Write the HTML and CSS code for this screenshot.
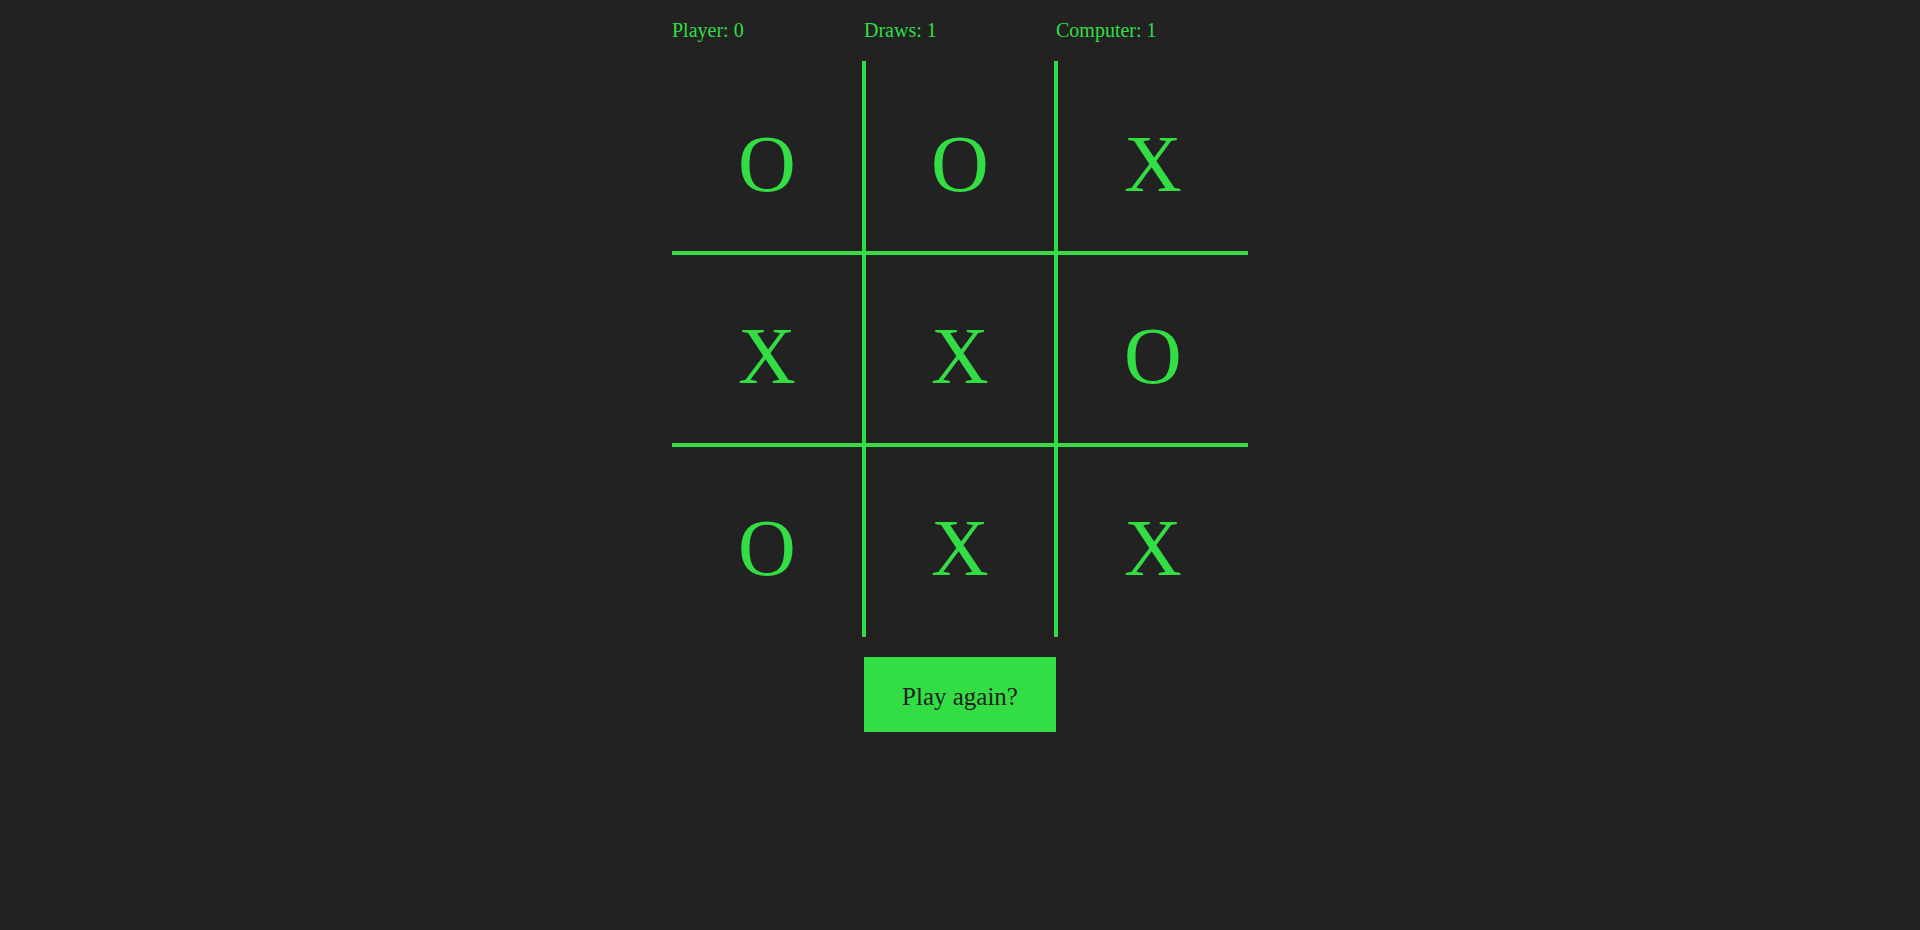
FILE: index.html
```html
<!DOCTYPE html>
<html>
<head>
<meta charset="utf-8">
<title>Tic Tac Toe</title>
<link rel="stylesheet" href="styles.css">
</head>
<body>
<div class="game">
  <div class="scores">
    <div class="score">Player: 0</div>
    <div class="score">Draws: 1</div>
    <div class="score">Computer: 1</div>
  </div>
  <div class="board">
    <div class="cell r1 c1">O</div>
    <div class="cell r1 c2">O</div>
    <div class="cell r1 c3">X</div>
    <div class="cell r2 c1">X</div>
    <div class="cell r2 c2">X</div>
    <div class="cell r2 c3">O</div>
    <div class="cell r3 c1">O</div>
    <div class="cell r3 c2">X</div>
    <div class="cell r3 c3">X</div>
  </div>
  <div class="actions">
    <button class="again">Play again?</button>
  </div>
</div>
</body>
</html>
```
FILE: styles.css
```css
html, body {
  margin: 0;
  padding: 0;
  background: #222222;
  height: 100%;
}
body {
  font-family: "Liberation Serif", "Times New Roman", serif;
  color: #33dd44;
}
.game {
  width: 576px;
  margin: 0 auto;
  padding-top: 19px;
}
.scores {
  display: grid;
  grid-template-columns: repeat(3, 192px);
  font-size: 20px;
  line-height: 23px;
  height: 23px;
  margin-bottom: 19px;
}
.board {
  display: grid;
  grid-template-columns: repeat(3, 192px);
  grid-template-rows: repeat(3, 192px);
}
.cell {
  box-sizing: border-box;
  border: 2px solid #33dd44;
  font-size: 80px;
  text-align: center;
  padding-top: 58px;
}
.r1 { border-top: none; padding-top: 58px; }
.r2, .r3 { padding-top: 56px; }
.r3 { border-bottom: none; }
.c1 { border-left: none; }
.c3 { border-right: none; }
.actions {
  display: flex;
  justify-content: center;
  margin-top: 20px;
}
.again {
  width: 192px;
  height: 75px;
  background: #33dd44;
  color: #222222;
  border: none;
  font-family: "Liberation Serif", "Times New Roman", serif;
  font-size: 25px;
  padding: 4px 0 0 0;
  cursor: pointer;
}
```
